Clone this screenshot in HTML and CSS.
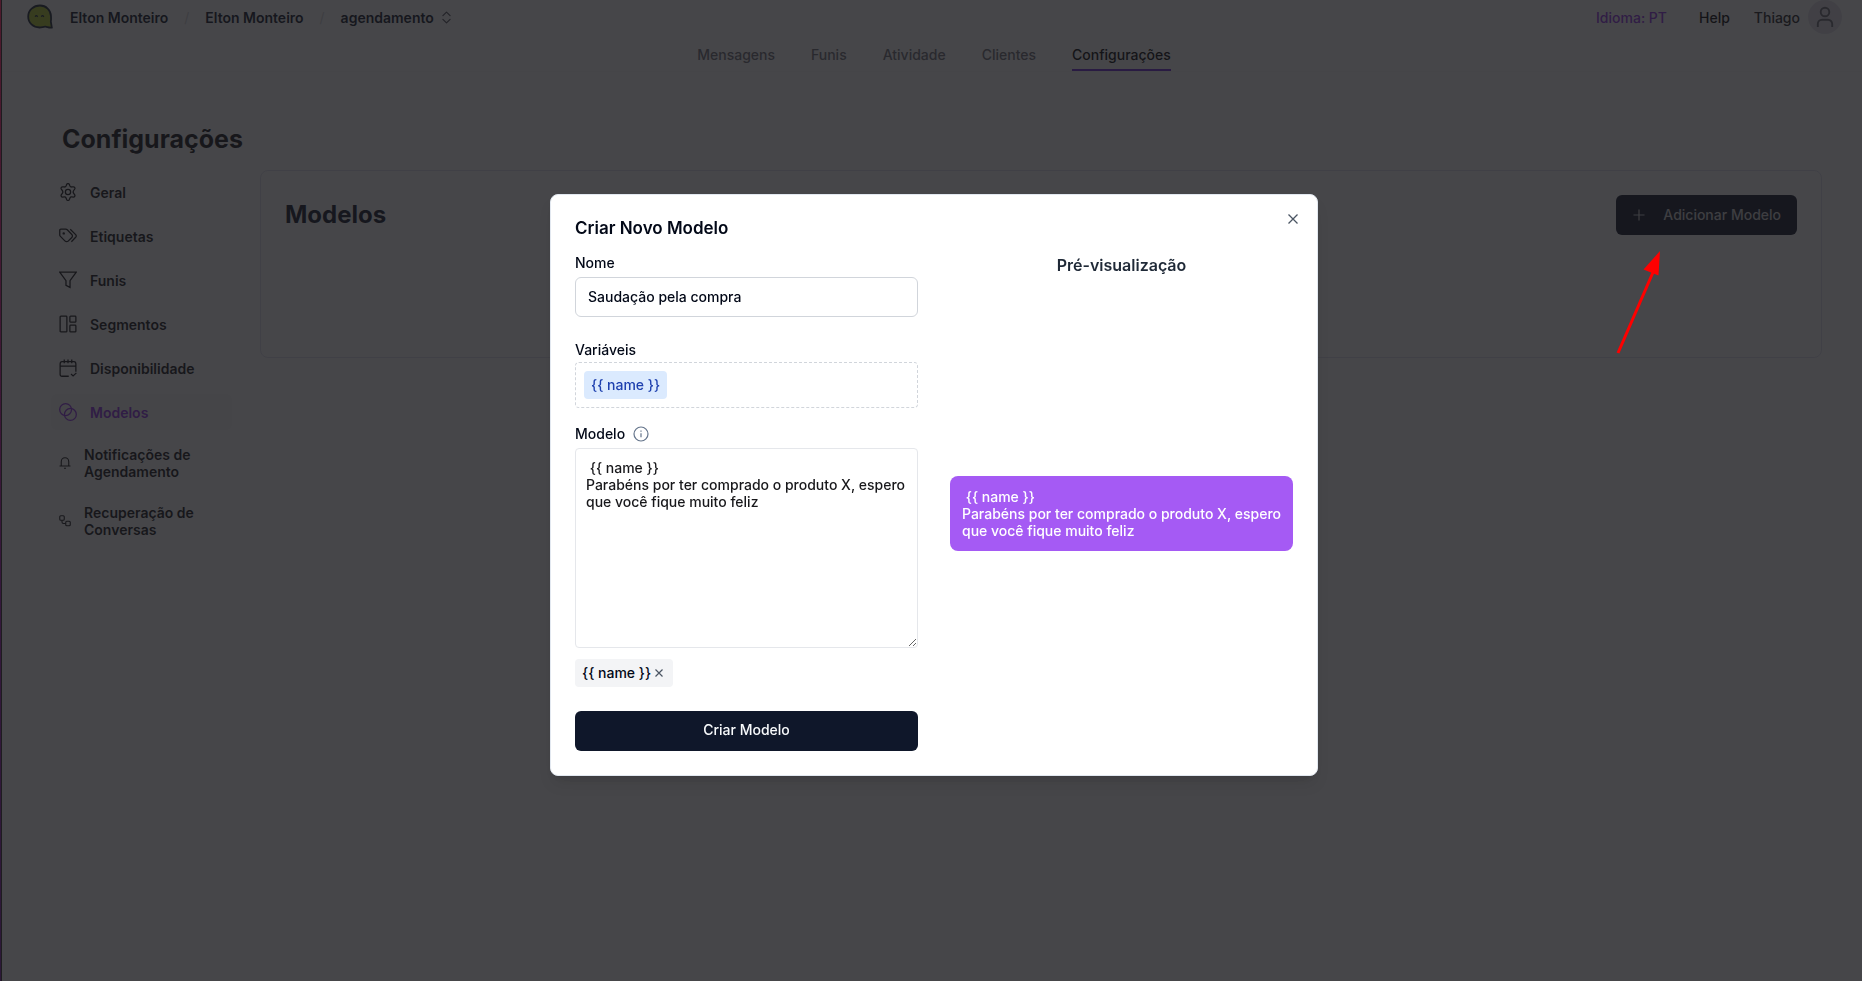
FILE: index.html
```html
<!DOCTYPE html>
<html lang="pt">
<head>
<meta charset="utf-8">
<title>Configurações - Modelos</title>
<link rel="stylesheet" href="styles.css">
</head>
<body>
<div class="edge"></div>
<header class="header">
  <div class="topbar">
    <div class="crumbs">
      <svg class="logo" viewBox="0 0 26 26" fill="none"><path d="M13 1.5C6.500 1.500 1.200 6.300 1.200 12.500C1.200 19 6.200 23.500 12.500 23.500C15 23.500 16.500 22.500 18.500 22.700C20.500 22.900 22 24 24.800 23.500L23.800 17.500C24.300 15.500 24 14 24 12.200C23.800 6 19 1.500 13 1.500Z" fill="#b4cc30" stroke="#1e293b" stroke-width="1.800"/><path d="M8.200 12.800q1-2.200 2.400 0M14.400 12.800q1-2.200 2.400 0" stroke="#1e293b" stroke-width="1.300"/></svg>
      <a class="crumb" href="#">Elton Monteiro</a>
      <span class="slash">/</span>
      <a class="crumb" href="#">Elton Monteiro</a>
      <span class="slash">/</span>
      <button class="crumb picker" type="button">agendamento
        <svg class="updown" viewBox="0 0 10 14" fill="none" stroke="currentColor" stroke-width="1.300" stroke-linecap="round" stroke-linejoin="round"><path d="M1 5l4-4 4 4M1 9l4 4 4-4"/></svg>
      </button>
    </div>
    <div class="account">
      <a class="lang" href="#">Idioma: PT</a>
      <a class="help" href="#">Help</a>
      <span class="user">Thiago</span>
      <button class="avatar" type="button" aria-label="Conta"><svg viewBox="0 0 20 22" fill="none" stroke="currentColor" stroke-width="1.900"><circle cx="10" cy="6" r="4.300"/><path d="M2.800 21v-3a4.200 4.200 0 0 1 4.200-4.200h6a4.200 4.200 0 0 1 4.200 4.200v3"/></svg></button>
    </div>
  </div>
  <nav class="tabs">
    <a class="tab" href="#">Mensagens</a>
    <a class="tab" href="#">Funis</a>
    <a class="tab" href="#">Atividade</a>
    <a class="tab" href="#">Clientes</a>
    <a class="tab tab-active" href="#">Configurações</a>
  </nav>
</header>

<main class="page">
  <h1 class="page-title">Configurações</h1>
  <div class="layout">
    <nav class="side">
      <a class="side-link" href="#"><svg class="side-icon" viewBox="0 0 24 24"><path d="M10.300 1.700c.7-1.200 2.700-1.200 3.400 0l.9 2.300c.4.900 1.300 1.400 2.300 1.300l2.400-.2c1.400-.1 2.400 1.600 1.700 2.900l-1.400 2a3.300 3.300 0 0 0 0 3.900l1.400 2c.7 1.300-.3 3-1.700 2.900l-2.400-.2c-1-.1-1.900.4-2.300 1.300l-.9 2.400c-.7 1.200-2.700 1.200-3.400 0l-.9-2.400c-.4-.9-1.300-1.400-2.300-1.300l-2.400.2c-1.400.1-2.400-1.600-1.700-2.900l1.400-2a3.300 3.300 0 0 0 0-3.900L3 8c-.7-1.300.3-3 1.700-2.900l2.400.2c1 .1 1.900-.4 2.300-1.300z"/><circle cx="12" cy="12" r="3.500"/></svg>Geral</a>
      <a class="side-link" href="#"><svg class="side-icon" viewBox="0 0 24 24"><path d="M1 4.500v6c0 .8.300 1.500.9 2l6.300 6.300a2.800 2.800 0 0 0 4 0l4.900-4.900a2.800 2.800 0 0 0 0-4L11 3.700c-.5-.5-1.200-.8-2-.8H2.500C1.600 2.900 1 3.600 1 4.500z"/><path d="M15 3l7.200 7.200c.9.900.9 2.400 0 3.400L16.500 19.600"/><circle cx="6.300" cy="8.500" r=".8"/></svg>Etiquetas</a>
      <a class="side-link" href="#"><svg class="side-icon" viewBox="0 0 24 24"><path d="M1 1.500h22l-8.300 11.300v9L9.300 19v-6.200z"/></svg>Funis</a>
      <a class="side-link" href="#"><svg class="side-icon" viewBox="0 0 24 24"><rect x="1.500" y="1.500" width="9" height="21" rx="1"/><rect x="14.500" y="1.500" width="8" height="8" rx="1"/><rect x="14.500" y="13.500" width="8" height="9" rx="1"/></svg>Segmentos</a>
      <a class="side-link" href="#"><svg class="side-icon" viewBox="0 0 24 24"><path d="M13 23H4c-1.500 0-2.500-1-2.500-2.500v-14C1.500 4.800 2.500 3.500 4 3.500h16c1.500 0 2.500 1.300 2.500 3V17M1.500 9.500h21M7 .8v5M12 .8v5M17 .8v5M16 20l2.800 2.500 4.400-4"/></svg>Disponibilidade</a>
      <a class="side-link side-active" href="#"><svg class="side-icon" viewBox="0 0 24 24"><circle cx="8.800" cy="8.800" r="7.900"/><circle cx="15.200" cy="15.200" r="7.900"/></svg>Modelos</a>
      <a class="side-link side-small" href="#"><svg class="side-icon-small" viewBox="0 0 24 24"><path d="M1 18h22M4.500 18V9.500C4.500 4.500 7.500 1.500 12 1.500s7.500 3 7.500 8V18M10 22.500h4"/></svg>Notificações de Agendamento</a>
      <a class="side-link side-small" href="#"><svg class="side-icon-small" viewBox="0 0 24 24"><rect x="1.500" y="1.500" width="9" height="9" rx="2"/><rect x="13.500" y="12.500" width="9" height="9" rx="2"/><path d="M6 10.500v3.500c0 2 1 3 3 3h4.500"/></svg>Recuperação de Conversas</a>
    </nav>
    <section class="card">
      <h2 class="card-title">Modelos</h2>
      <button class="add" type="button"><svg class="plus" viewBox="0 0 12 12" fill="none" stroke="currentColor" stroke-width="1.200"><path d="M6 .5v11M.5 6h11"/></svg>Adicionar Modelo</button>
    </section>
  </div>
</main>

<div class="overlay">
  <div class="dialog" role="dialog" aria-modal="true" aria-labelledby="dialog-title">
    <button class="close" type="button" aria-label="Fechar"><svg viewBox="0 0 10 10" fill="none" stroke="currentColor" stroke-width="1.300"><path d="M.5.5l9 9M9.500.5l-9 9"/></svg></button>
    <h2 class="dialog-title" id="dialog-title">Criar Novo Modelo</h2>
    <div class="columns">
      <form class="form">
        <label class="label" for="name">Nome</label>
        <input class="input" id="name" type="text" value="Saudação pela compra">
        <div class="vars-label">Variáveis</div>
        <div class="vars"><button class="chip chip-blue" type="button">{{ name }}</button></div>
        <div class="label-row">
          <label for="model">Modelo</label>
          <svg class="info" viewBox="0 0 16 16" fill="none" stroke="currentColor" stroke-width="1.200"><circle cx="8" cy="8" r="7"/><path d="M8 7.200v4M8 4.500v1.200"/></svg>
        </div>
        <textarea class="textarea" id="model"> {{ name }}
Parabéns por ter comprado o produto X, espero que você fique muito feliz</textarea>
        <div class="used"><span class="chip chip-gray">{{ name }}<button class="remove" type="button" aria-label="Remover"><svg viewBox="0 0 8 8" fill="none" stroke="currentColor" stroke-width="1.200"><path d="M.5.5l7 7M7.500.5l-7 7"/></svg></button></span></div>
        <button class="submit" type="button">Criar Modelo</button>
      </form>
      <section class="preview">
        <h3 class="preview-title">Pré-visualização</h3>
        <div class="preview-area"><p class="bubble"> {{ name }}
Parabéns por ter comprado o produto X, espero que você fique muito feliz</p></div>
      </section>
    </div>
  </div>
</div>
<svg class="arrow" viewBox="0 0 46 106"><path d="M3 103L39 20" stroke="#f00" stroke-width="3" fill="none"/><path d="M45 1L28.500 19.500 43.500 25.500z" fill="#f00"/></svg>
</body>
</html>
```
FILE: styles.css
```css
* {
  box-sizing: border-box;
}

body {
  margin: 0;
  min-height: 100vh;
  background: #fff;
  color: #18181b;
  font: 500 14px/17px Inter, sans-serif;
}

h1, h2, h3, p {
  margin: 0;
}

a {
  color: inherit;
  text-decoration: none;
}

button, input, textarea {
  font: inherit;
  color: inherit;
}

button {
  border: 0;
  padding: 0;
  background: none;
}

.edge {
  position: fixed;
  inset: 0 auto 0 0;
  width: 2px;
  z-index: 3;
  background: linear-gradient(#4f1a2c, #35183c 60%, #2c1838);
  border-right: 1px solid #1e1c20;
}

.header {
  border-bottom: 1px solid #fafafa;
}

.topbar {
  display: flex;
  justify-content: space-between;
  align-items: center;
  height: 34px;
  padding: 0 20px 0 27px;
}

.crumbs, .account {
  display: flex;
  align-items: center;
}

.logo {
  width: 26px;
  height: 26px;
  margin-right: 17px;
}

.crumb {
  font-weight: 600;
  color: #0f172a;
}

.slash {
  width: 37px;
  text-align: center;
  color: #d4d4d8;
  font-weight: 400;
}

.picker {
  display: flex;
  align-items: center;
  gap: 8px;
}

.updown {
  width: 9px;
  height: 13px;
  color: #52525b;
}

.lang {
  color: #9333ea;
  margin-right: 32px;
}

.help {
  color: #09090b;
  margin-right: 24px;
}

.user {
  margin-right: 8px;
  color: #27272a;
}

.avatar {
  display: grid;
  place-items: center;
  width: 34px;
  height: 34px;
  border-radius: 50%;
  background: #e4e2ec;
  color: #71717a;
}

.avatar svg {
  width: 20px;
  height: 22px;
}

.tabs {
  display: flex;
  justify-content: center;
  gap: 36px;
  padding-left: 6px;
}

.tab {
  padding: 12px 0 6px;
  border-bottom: 2px solid transparent;
  color: #71717a;
}

.tab-active {
  color: #09090b;
  border-color: #6d28d9;
}

.page {
  padding: 52px 40px 0 51px;
}

.page-title {
  padding-left: 11px;
  font-size: 25px;
  line-height: 30px;
  font-weight: 700;
}

.layout {
  display: flex;
  align-items: flex-start;
  gap: 28px;
  padding-top: 16px;
}

.side {
  flex: none;
  width: 181px;
  display: flex;
  flex-direction: column;
  gap: 8px;
  padding-top: 4px;
}

.side-link {
  display: flex;
  align-items: center;
  gap: 13px;
  min-height: 36px;
  padding: 0 8px;
  border-radius: 6px;
  font-weight: 600;
}

.side-active {
  background: #f8f8f8;
  color: #9333ea;
}

.side-small {
  min-height: 50px;
  padding-right: 20px;
}

.side-icon, .side-icon-small {
  flex: none;
  width: 18px;
  height: 18px;
  fill: none;
  stroke: currentColor;
  stroke-width: 1.7;
}

.side-icon-small {
  width: 12px;
  height: 12px;
  stroke-width: 2.2;
}

.card {
  flex: 1;
  display: flex;
  align-items: flex-start;
  justify-content: space-between;
  min-height: 188px;
  padding: 24px;
  border: 1px solid #e2e2ee;
  border-radius: 8px;
}

.card-title {
  font-size: 24px;
  line-height: 40px;
  font-weight: 700;
  color: #0f172a;
}

.add {
  display: flex;
  align-items: center;
  gap: 18px;
  height: 40px;
  padding: 0 16px 0 17px;
  border-radius: 6px;
  background: #0f172a;
  color: #d4d4d8;
  line-height: 20px;
}

.plus {
  width: 12px;
  height: 12px;
}

.overlay {
  position: fixed;
  inset: 0;
  z-index: 2;
  display: grid;
  place-items: center;
  padding: 0 0 11px 6px;
  background: rgba(24, 24, 27, 0.8);
}

.dialog {
  position: relative;
  width: 768px;
  max-width: 100%;
  padding: 24px;
  border: 1px solid #e2e8f0;
  border-radius: 8px;
  background: #fff;
  color: #020817;
  box-shadow: 0 10px 15px -3px rgba(0, 0, 0, 0.1), 0 4px 6px -4px rgba(0, 0, 0, 0.1);
}

.close {
  position: absolute;
  top: 16px;
  right: 16px;
  display: grid;
  place-items: center;
  width: 16px;
  height: 16px;
  color: #4b5563;
}

.close svg {
  width: 10px;
  height: 10px;
}

.dialog-title {
  font-size: 17px;
  line-height: 18px;
  font-weight: 600;
}

.columns {
  display: grid;
  grid-template-columns: 1fr 1fr;
  gap: 32px;
  padding-top: 16px;
}

.form {
  display: flex;
  flex-direction: column;
}

.label {
  line-height: 20px;
  margin-bottom: 4px;
}

.input {
  width: 100%;
  height: 40px;
  padding: 0 12px 2px;
  border: 1px solid #d1d5db;
  border-radius: 6px;
  background: #fff;
}

.vars-label {
  margin: 24px 0 4px;
}

.vars {
  display: flex;
  padding: 8px;
  border: 1px dashed #d1d5db;
  border-radius: 4px;
}

.chip {
  display: flex;
  align-items: center;
  height: 28px;
  padding: 0 7px;
  border-radius: 4px;
  line-height: 20px;
}

.chip-blue {
  background: #dbeafe;
  color: #1e40af;
}

.label-row {
  display: flex;
  align-items: center;
  gap: 8px;
  margin: 16px 0 4px;
  line-height: 20px;
}

.info {
  width: 16px;
  height: 16px;
  color: #64748b;
}

.textarea {
  display: block;
  width: 100%;
  height: 200px;
  padding: 10px;
  border: 1px solid #e5e7eb;
  border-radius: 4px;
  background: #fff;
  color: #18181b;
  resize: vertical;
}

.used {
  display: flex;
  padding: 11px 0 24px;
}

.chip-gray {
  background: #f3f4f6;
}

.remove {
  display: grid;
  place-items: center;
  width: 14px;
  height: 14px;
  margin-left: 1px;
  color: #4b5563;
}

.remove svg {
  width: 8px;
  height: 8px;
}

.submit {
  height: 40px;
  padding-bottom: 2px;
  border-radius: 6px;
  background: #0f172a;
  color: #f8fafc;
  line-height: 20px;
}

.preview {
  display: flex;
  flex-direction: column;
}

.preview-title {
  font-size: 16px;
  line-height: 24px;
  font-weight: 600;
  text-align: center;
  color: #1f2937;
}

.preview-area {
  flex: 1;
  display: flex;
  align-items: center;
  padding-bottom: 2px;
}

.bubble {
  width: 100%;
  padding: 12px;
  border-radius: 8px;
  background: #a55af4;
  color: #fff;
  white-space: pre-wrap;
}

.arrow {
  position: absolute;
  top: 250px;
  right: 201px;
  z-index: 3;
  width: 46px;
  height: 106px;
}
```
